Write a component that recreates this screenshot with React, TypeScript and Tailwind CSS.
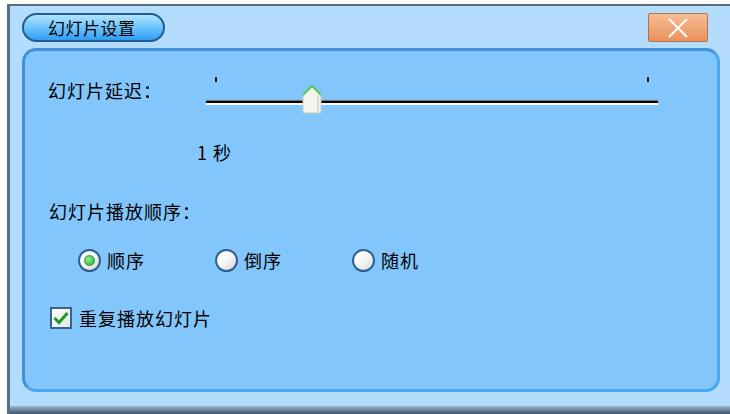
import React from "react";

const font = { fontFamily: '"Noto Sans CJK SC", "Noto Sans", sans-serif' };

function Radio({ checked, label }: { checked?: boolean; label: string }) {
  return (
    <div className="flex w-[137px] items-center gap-[6px]">
      <div className="flex h-[23px] w-[23px] items-center justify-center rounded-full border-[2px] border-[#2d5f8e] bg-linear-to-br from-white via-[#f6f6f6] to-[#d4d4d4]">
        {checked && (
          <div className="h-[11px] w-[11px] rounded-full bg-radial-[at_35%_35%] from-[#8ef08e] to-[#1fae2a] border border-[#2a9a30]" />
        )}
      </div>
      <span>{label}</span>
    </div>
  );
}

function Thumb() {
  return (
    <svg width="20" height="29" viewBox="0 0 20 29" className="absolute left-[96px] top-[15px]">
      <polygon points="1,10 10,1 19,10 19,28 1,28" fill="#f5f5ef" stroke="#c8c8c0" strokeWidth="1" />
      <polyline points="16,10 16,27" stroke="#dcdcd4" strokeWidth="2" />
      <polyline points="1,10 10,1 19,10" fill="none" stroke="#58c858" strokeWidth="2" />
    </svg>
  );
}

export default function App() {
  return (
    <div className="flex h-[414px] w-[730px] bg-white pl-[7px] pt-[4px] text-black" style={font}>
      <div className="flex flex-1 flex-col border-l-[3px] border-t-[2px] border-[#586e84] bg-[#b4dcfc]">
        {/* title bar */}
        <div className="mt-[7px] flex h-[29px] items-center justify-between pl-[12px] pr-[22px]">
          <div className="flex h-[29px] w-[143px] items-center rounded-full border-[2px] border-[#1f5d96] bg-linear-to-b from-[#b0e4ff] via-[#6cc4fc] to-[#2f9cf2] pl-[24px] text-[17px] tracking-[0.5px]">
            幻灯片设置
          </div>
          <div className="flex h-[29px] w-[60px] items-center justify-center rounded-[2px] border border-[#b4744a] bg-linear-to-b from-[#f6bc94] to-[#ea915c]">
            <svg width="22" height="20" viewBox="0 0 22 20">
              <path d="M2 1 L20 19 M20 1 L2 19" stroke="white" strokeWidth="2" />
            </svg>
          </div>
        </div>

        {/* content panel */}
        <div className="ml-[12px] mr-[10px] mt-[6px] flex h-[344px] flex-col rounded-[14px] border-[3px] border-[#4aa8f0] border-t-[#3d92d8] border-l-[#3d92d8] bg-[#82c6fc] text-[18px] tracking-[1px]">
          <div className="mt-[19px] flex h-[40px] items-center">
            <div className="w-[181px] shrink-0 pl-[23px]">幻灯片延迟：</div>
            <div className="relative h-[40px] w-[452px]">
              <div className="absolute left-[9px] top-[7px] h-[5px] w-[2px] bg-[#1a1a1a]" />
              <div className="absolute left-[441px] top-[7px] h-[5px] w-[2px] bg-[#1a1a1a]" />
              <div className="absolute left-0 top-[30px] w-[452px]">
                <div className="h-[1px] bg-[#707070]" />
                <div className="h-[2px] bg-black" />
                <div className="h-[2px] bg-white" />
              </div>
              <Thumb />
            </div>
          </div>

          <div className="mt-[30px] flex h-[24px] items-center pl-[172px]">
            <span>1 秒</span>
          </div>

          <div className="mt-[35px] flex h-[24px] items-center pl-[24px]">幻灯片播放顺序：</div>

          <div className="mt-[25px] flex h-[24px] items-center pl-[53px]">
            <Radio checked label="顺序" />
            <Radio label="倒序" />
            <Radio label="随机" />
          </div>

          <div className="mt-[34px] flex h-[24px] items-center gap-[7px] pl-[25px]">
            <div className="flex h-[22px] w-[22px] items-center justify-center border-[2px] border-[#35648f] bg-linear-to-br from-white to-[#e4e4e4]">
              <svg width="16" height="14" viewBox="0 0 16 14">
                <path d="M1.5 7 L6 11.5 L14.5 2" fill="none" stroke="#1f9a26" strokeWidth="3" />
              </svg>
            </div>
            <span>重复播放幻灯片</span>
          </div>
        </div>

        <div className="flex-1" />
        <div className="h-[8px] bg-linear-to-b from-[#9fb6cc] to-[#3f5468]" />
      </div>
    </div>
  );
}
